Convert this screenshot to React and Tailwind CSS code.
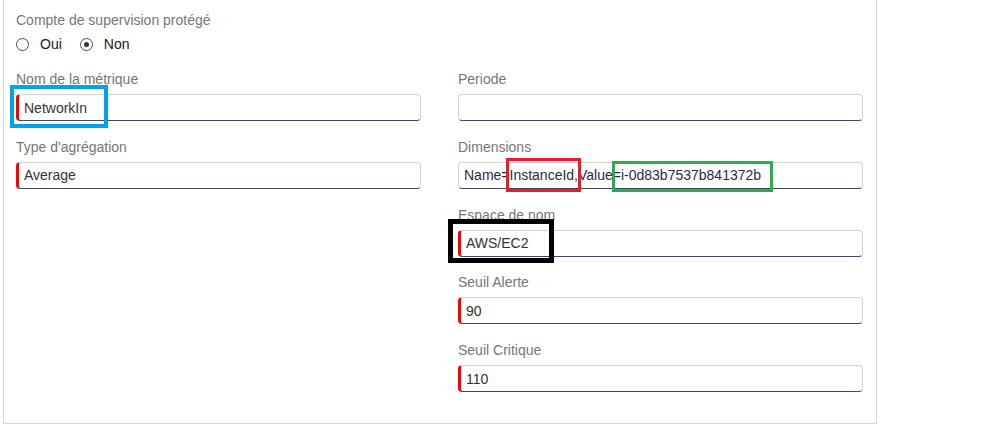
import React from "react";

function Field({ label, value, required, textClass = "text-[#333]" }) {
  return (
    <div className="flex flex-col">
      <div className="h-[20px] leading-[20px] text-[#767676]">{label}</div>
      <div
        className={
          "mt-[5px] h-[27px] rounded-[4px] border border-[#d2d2d2] border-b-[#464664] bg-white flex items-center leading-[20px] " +
          (required ? "border-l-[3px] border-l-[#ff0000] pl-[5px] pr-[6px] " : "px-[5px] ") +
          textClass
        }
      >
        {value}
      </div>
    </div>
  );
}

function Radio({ checked, label }) {
  return (
    <div className="flex items-center">
      <span className="w-[13px] h-[13px] rounded-full border border-[#4a4a4a] bg-white flex items-center justify-center">
        {checked && <span className="w-[5px] h-[5px] rounded-full bg-[#333]" />}
      </span>
      <span className="ml-[11px] text-[#1a1a1a]">{label}</span>
    </div>
  );
}

export default function App() {
  return (
    <div className="relative w-[985px] h-[425px] overflow-hidden bg-white font-['Liberation_Sans',Arial,sans-serif] text-[14px]">
      <div className="ml-[3px] w-[874px] h-[424px] border-l border-r border-b border-[#d6d6d6] pl-[12px] pr-[13px] pt-[10px]">
        <div className="h-[20px] leading-[20px] text-[#767676]">Compte de supervision protégé</div>
        <div className="mt-[4px] h-[20px] flex items-center gap-[18px]">
          <Radio label="Oui" />
          <Radio checked label="Non" />
        </div>
        <div className="mt-[15px] grid grid-cols-2 gap-x-[37px]">
          <div className="flex flex-col gap-[15.75px]">
            <Field label="Nom de la métrique" value="NetworkIn" required />
            <Field label="Type d'agrégation" value="Average" required />
          </div>
          <div className="flex flex-col gap-[15.75px]">
            <Field label="Periode" value="" />
            <Field label="Dimensions" value="Name=InstanceId,Value=i-0d83b7537b841372b" textClass="text-[#2b2b45]" />
            <Field label="Espace de nom" value="AWS/EC2" required />
            <Field label="Seuil Alerte" value="90" required />
            <Field label="Seuil Critique" value="110" required />
          </div>
        </div>
      </div>

      <div className="absolute left-[10px] top-[85px] w-[98px] h-[43px] border-[4px] border-[#00a2e8]" />
      <div className="absolute left-[506px] top-[158px] w-[75px] h-[34px] border-[3px] border-[#ed1c24]" />
      <div className="absolute left-[612px] top-[161px] w-[161px] h-[31px] border-[3px] border-[#22b14c]" />
      <div className="absolute left-[448px] top-[219px] w-[106px] h-[44px] border-[5px] border-black" />
    </div>
  );
}
